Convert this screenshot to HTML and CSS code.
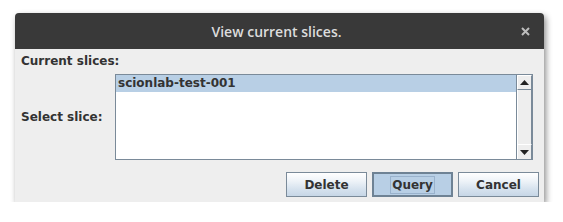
FILE: index.html
```html
<!DOCTYPE html>
<html lang="en">
<head>
    <title>View current slices.</title>
    <link rel="stylesheet" href="styles.css">
</head>
<body>
<div class="dialog">
    <div class="titlebar">
        <span class="title">View current slices.</span>
        <svg class="close" width="9" height="9" viewBox="0 0 9 9">
            <path d="M1 1 L8 8 M8 1 L1 8" stroke="#bdbdbd" stroke-width="2"/>
        </svg>
    </div>
    <div class="content">
        <div class="heading">Current slices:</div>
        <div class="row">
            <div class="label">Select slice:</div>
            <div class="list">
                <div class="items">
                    <div class="item selected">scionlab-test-001</div>
                </div>
                <div class="scrollbar">
                    <div class="arrow">
                        <svg width="9" height="5" viewBox="0 0 9 5"><polygon points="0,5 9,5 4.5,0" fill="#222"/></svg>
                    </div>
                    <div class="track"></div>
                    <div class="arrow">
                        <svg width="9" height="5" viewBox="0 0 9 5"><polygon points="0,0 9,0 4.5,5" fill="#222"/></svg>
                    </div>
                </div>
            </div>
        </div>
        <div class="buttons">
            <button class="btn">Delete</button>
            <button class="btn default"><span class="focus">Query</span></button>
            <button class="btn">Cancel</button>
        </div>
    </div>
</div>
</body>
</html>
```

FILE: styles.css
```css
body {
    margin: 0;
    background: #ffffff;
    font-family: "DejaVu Sans", sans-serif;
}

.dialog {
    margin: 13px 0 0 15px;
    width: 529px;
    height: 189px;
    background: #eeeeee;
    border-radius: 4px 4px 0 0;
    box-shadow: 2px 3px 6px rgba(0, 0, 0, 0.45);
    display: flex;
    flex-direction: column;
}

.titlebar {
    height: 36px;
    background: #393939;
    border-radius: 4px 4px 0 0;
    display: flex;
    align-items: center;
    justify-content: center;
    position: relative;
}

.title {
    font-family: "Open Sans", "Noto Sans", sans-serif;
    font-size: 14px;
    font-weight: 600;
    color: #dcdcdc;
    margin-left: -6px;
}

.close {
    position: absolute;
    right: 14px;
    top: 14px;
}

.content {
    flex: 1;
    padding: 5px 5px 5px 6px;
    display: flex;
    flex-direction: column;
}

.heading,
.label {
    font-size: 12px;
    font-weight: bold;
    color: #333333;
    line-height: 14px;
}

.row {
    display: flex;
    align-items: center;
    margin-top: 6px;
    margin-right: 6px;
}

.label {
    width: 94px;
}

.list {
    width: 416px;
    height: 84px;
    border: 1px solid #7a8a99;
    background: #ffffff;
    display: flex;
}

.items {
    flex: 1;
}

.item {
    height: 17px;
    line-height: 17px;
    padding-left: 2px;
    font-size: 12px;
    font-weight: bold;
    color: #333333;
}

.item.selected {
    background: #b8cfe5;
}

.scrollbar {
    width: 15px;
    display: flex;
    flex-direction: column;
    background: #eeeeee;
    border-left: 1px solid #7a8a99;
}

.arrow {
    height: 15px;
    display: flex;
    align-items: center;
    justify-content: center;
    background: #eeeeee;
    border: 1px solid #ffffff;
    border-right-color: #7a8a99;
    border-bottom-color: #7a8a99;
    box-sizing: border-box;
}

.arrow:last-child {
    border-bottom: none;
}

.track {
    flex: 1;
    border-left: 1px solid #ffffff;
    border-right: 1px solid #7a8a99;
}

.buttons {
    display: flex;
    justify-content: flex-end;
    gap: 5px;
    margin-top: 12px;
}

.btn {
    width: 81px;
    height: 25px;
    font-family: "DejaVu Sans", sans-serif;
    font-size: 12px;
    font-weight: bold;
    color: #333333;
    border: 1px solid #7a8a99;
    background: linear-gradient(#ffffff 0%, #eef3f8 35%, #d6e2ee 70%, #c6d6e6 100%);
    padding: 0;
}

.btn.default {
    background: #b8cfe5;
    border: 2px solid #6e8294;
}

.focus {
    border: 1px solid #99b2cc;
    padding: 1px 1px;
}
```
